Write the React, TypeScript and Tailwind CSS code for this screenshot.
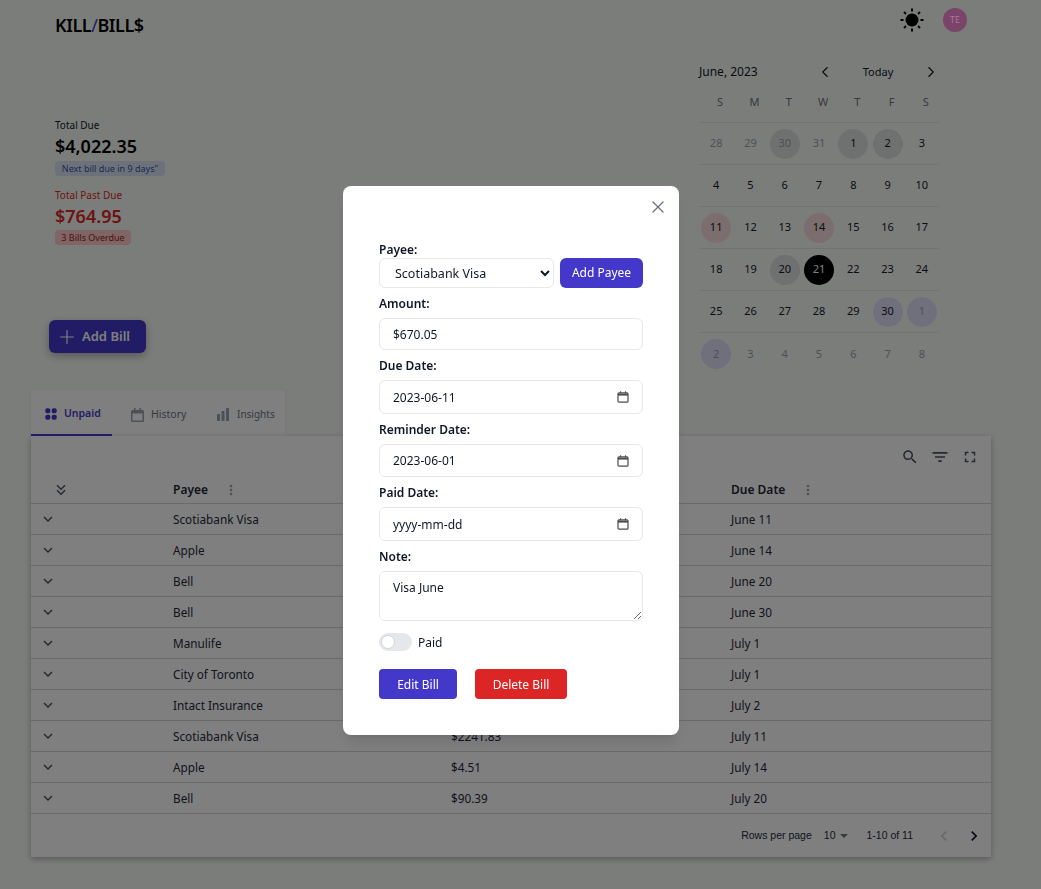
import { ChevronLeft, ChevronRight, Plus, X } from "lucide-react";

const FONT = "font-['Noto_Sans',sans-serif]";

const weeks = [
  [["28", "m", ""], ["29", "m", ""], ["30", "m", "gray"], ["31", "m", ""], ["1", "", "gray"], ["2", "", "gray"], ["3", "", ""]],
  [["4", "", ""], ["5", "", ""], ["6", "", ""], ["7", "", ""], ["8", "", ""], ["9", "", ""], ["10", "", ""]],
  [["11", "", "red"], ["12", "", ""], ["13", "", ""], ["14", "", "red"], ["15", "", ""], ["16", "", ""], ["17", "", ""]],
  [["18", "", ""], ["19", "", ""], ["20", "", "gray"], ["21", "", "today"], ["22", "", ""], ["23", "", ""], ["24", "", ""]],
  [["25", "", ""], ["26", "", ""], ["27", "", ""], ["28", "", ""], ["29", "", ""], ["30", "", "blue"], ["1", "m", "blue"]],
  [["2", "m", "blue"], ["3", "m", ""], ["4", "m", ""], ["5", "m", ""], ["6", "m", ""], ["7", "m", ""], ["8", "m", ""]],
];

const rows = [
  ["Scotiabank Visa", "$670.05", "June 11"],
  ["Apple", "$4.51", "June 14"],
  ["Bell", "$90.39", "June 20"],
  ["Bell", "$65.00", "June 30"],
  ["Manulife", "$312.40", "July 1"],
  ["City of Toronto", "$188.22", "July 1"],
  ["Intact Insurance", "$145.10", "July 2"],
  ["Scotiabank Visa", "$2241.83", "July 11"],
  ["Apple", "$4.51", "July 14"],
  ["Bell", "$90.39", "July 20"],
];

function MuiIcon({ d, size, className }: { d: string; size: number; className?: string }) {
  return (
    <svg width={size} height={size} viewBox="0 0 24 24" fill="currentColor" className={className}>
      <path d={d} />
    </svg>
  );
}

const icons = {
  search:
    "M15.5 14h-.79l-.28-.27C15.41 12.59 16 11.11 16 9.5 16 5.91 13.09 3 9.5 3S3 5.91 3 9.5 5.91 16 9.5 16c1.61 0 3.09-.59 4.23-1.57l.27.28v.79l5 4.99L20.49 19l-4.99-5zm-6 0C7.01 14 5 11.99 5 9.5S7.01 5 9.5 5 14 7.01 14 9.5 11.99 14 9.5 14z",
  filter: "M10 18h4v-2h-4v2zM3 6v2h18V6H3zm3 7h12v-2H6v2z",
  full: "M7 14H5v5h5v-2H7v-3zm-2-4h2V7h3V5H5v5zm12 7h-3v2h5v-5h-2v3zM14 5v2h3v3h2V5h-5z",
  expand: "M16.59 8.59 12 13.17 7.41 8.59 6 10l6 6 6-6z",
  expandAll: "M18 6.41 16.59 5 12 9.58 7.41 5 6 6.41l6 6zM18 13l-1.41-1.41L12 16.17l-4.59-4.58L6 13l6 6z",
  more: "M12 8c1.1 0 2-.9 2-2s-.9-2-2-2-2 .9-2 2 .9 2 2 2zm0 2c-1.1 0-2 .9-2 2s.9 2 2 2 2-.9 2-2-.9-2-2-2zm0 6c-1.1 0-2 .9-2 2s.9 2 2 2 2-.9 2-2-.9-2-2-2z",
  prev: "M15.41 7.41 14 6l-6 6 6 6 1.41-1.41L10.83 12z",
  next: "M10 6 8.59 7.41 13.17 12l-4.58 4.59L10 18l6-6z",
};

function Sun() {
  return (
    <svg width="26" height="26" viewBox="0 0 26 26" fill="black" stroke="black" strokeWidth="2">
      <circle cx="13" cy="13" r="6.5" stroke="none" />
      <path d="M13 1.5v3M13 21.5v3M1.5 13h3M21.5 13h3M5 5l2 2M19 19l2 2M5 21l2-2M19 7l2-2" fill="none" />
    </svg>
  );
}

function Calendar() {
  const tone: Record<string, string> = {
    gray: "bg-[#dfe0e1]",
    red: "bg-[#f8dcdc]",
    blue: "bg-[#e0e0fb]",
    today: "bg-black text-white",
  };
  return (
    <div className="w-[240px] text-[11px] text-gray-900">
      <div className="flex h-[20px] items-center pt-[2px]">
        <span className="w-[117px] shrink-0 text-xs">June, 2023</span>
        <ChevronLeft className="h-[18px] w-[18px] shrink-0" strokeWidth={1.5} />
        <span className="w-[88px] shrink-0 text-center">Today</span>
        <ChevronRight className="h-[18px] w-[18px] shrink-0" strokeWidth={1.5} />
      </div>
      <div className="mt-[1px] grid h-[41px] grid-cols-7 items-center border-b border-gray-200 text-center text-gray-500">
        {["S", "M", "T", "W", "T", "F", "S"].map((d, i) => (
          <span key={i} className="pl-[8px]">
            {d}
          </span>
        ))}
      </div>
      {weeks.map((week, w) => (
        <div key={w} className="grid h-[42px] grid-cols-7 items-center border-b border-gray-200 last:border-b-0">
          {week.map(([label, muted, mark], i) => (
            <div key={i} className="flex justify-center">
              <span
                className={`flex h-[30px] w-[30px] items-center justify-center rounded-full ${tone[mark] ?? ""} ${
                  muted ? "text-gray-400" : ""
                }`}
              >
                {label}
              </span>
            </div>
          ))}
        </div>
      ))}
    </div>
  );
}

function BillTable() {
  return (
    <div className="w-[960px] bg-white shadow-[0_2px_6px_rgba(0,0,0,0.3)]">
      <div className="flex h-[40px] items-center justify-end pr-[12px] pt-[1px] text-gray-600">
        <MuiIcon d={icons.search} size={18} className="mr-[11px]" />
        <MuiIcon d={icons.filter} size={20} className="mr-[11px]" />
        <MuiIcon d={icons.full} size={18} />
      </div>
      <div className="grid h-[28px] grid-cols-[142px_278px_280px_1fr] items-center border-b border-gray-300 text-xs font-semibold text-gray-800">
        <MuiIcon d={icons.expandAll} size={18} className="ml-[21px] text-gray-600" />
        <div className="flex items-center">
          <span className="w-[50px]">Payee</span>
          <MuiIcon d={icons.more} size={16} className="text-gray-400" />
        </div>
        <div className="flex items-center">
          <span className="w-[50px]">Amount</span>
          <MuiIcon d={icons.more} size={16} className="text-gray-400" />
        </div>
        <div className="flex items-center">
          <span className="w-[69px]">Due Date</span>
          <MuiIcon d={icons.more} size={16} className="text-gray-400" />
        </div>
      </div>
      {rows.map(([payee, amount, due], i) => (
        <div
          key={i}
          className="grid h-[31px] grid-cols-[142px_278px_280px_1fr] items-center border-b border-gray-300 text-[11.75px] text-gray-800"
        >
          <MuiIcon d={icons.expand} size={18} className="ml-[8px] text-gray-600" />
          <span className="pt-[1px]">{payee}</span>
          <span className="pt-[1px]">{amount}</span>
          <span className="pt-[1px]">{due}</span>
        </div>
      ))}
      <div className="flex h-[43px] items-center justify-end font-['Liberation_Sans',sans-serif] text-[10.5px] text-gray-800">
        <span>Rows per page</span>
        <span className="ml-[12px]">10</span>
        <span className="ml-[5px] mt-[1px] h-0 w-0 border-x-[4px] border-t-[4px] border-x-transparent border-t-gray-500" />
        <span className="ml-[18px]">1-10 of 11</span>
        <MuiIcon d={icons.prev} size={20} className="ml-[21px] text-gray-300" />
        <MuiIcon d={icons.next} size={20} className="ml-[10px] mr-[7px] text-gray-900" />
      </div>
    </div>
  );
}

function Tabs() {
  return (
    <div className="flex h-[46px] w-[254px] items-stretch rounded-t bg-white text-[10.5px] text-gray-500 shadow-[0_0_3px_rgba(0,0,0,0.08)]">
      <div className="flex w-[81px] items-center gap-[7px] border-b-2 border-[#4338ca] pl-[14px] pt-[3px] font-semibold text-[#4338ca]">
        <svg width="12" height="12" viewBox="0 0 12 12" fill="currentColor">
          <rect x="0.3" y="0.3" width="5" height="5" rx="1.8" />
          <rect x="6.7" y="0.3" width="5" height="5" rx="1.8" />
          <rect x="0.3" y="6.7" width="5" height="5" rx="1.8" />
          <rect x="6.7" y="6.7" width="5" height="5" rx="1.8" />
        </svg>
        Unpaid
      </div>
      <div className="flex w-[87px] items-center gap-[7px] pl-[19px] pt-[3px]">
        <svg width="13" height="14" viewBox="0 0 13 14" fill="currentColor" className="text-gray-400">
          <path d="M3 0h1.5v2h4V0H10v2h1.5A1.5 1.5 0 0 1 13 3.5v9a1.5 1.5 0 0 1-1.5 1.5h-10A1.5 1.5 0 0 1 0 12.5v-9A1.5 1.5 0 0 1 1.5 2H3zM1.5 5.5v7h10v-7z" />
        </svg>
        History
      </div>
      <div className="flex w-[86px] items-center gap-[8px] pl-[18px] pt-[3px] text-[10px]">
        <svg width="12" height="13" viewBox="0 0 12 13" fill="currentColor" className="text-gray-400">
          <rect x="0" y="6" width="3" height="7" rx="0.5" />
          <rect x="4.5" y="3" width="3" height="10" rx="0.5" />
          <rect x="9" y="0" width="3" height="13" rx="0.5" />
        </svg>
        Insights
      </div>
    </div>
  );
}

function Field({ label, className, children }: { label: string; className?: string; children: React.ReactNode }) {
  return (
    <div className={className ?? "mt-[6px]"}>
      <label className="block h-[20px] text-xs font-semibold leading-[20px] text-gray-900">{label}</label>
      {children}
    </div>
  );
}

const inputClass =
  "mt-1 block w-full rounded-md border border-gray-200 bg-white px-[13px] text-xs text-gray-900 outline-none placeholder:text-gray-900";

function DateInput({ value, height }: { value?: string; height: string }) {
  return (
    <div className="relative">
      <input type="text" defaultValue={value} placeholder="yyyy-mm-dd" className={`${inputClass} ${height}`} />
      <svg
        width="12"
        height="12"
        viewBox="0 0 12 12"
        fill="none"
        stroke="#4b4b4b"
        className="absolute right-[14px] top-[11px]"
      >
        <rect x="1" y="1.8" width="10" height="9.4" rx="1" strokeWidth="1.2" />
        <path d="M1 3.6h10" strokeWidth="2" />
        <path d="M3.5 0.3v2M8.5 0.3v2" strokeWidth="1.1" />
      </svg>
    </div>
  );
}

function BillModal() {
  return (
    <div className="fixed inset-0 z-40 bg-black/50 pl-[343px] pt-[186px]">
      <div className={`relative h-[549px] w-[336px] rounded-lg bg-white px-[36px] pt-[54px] shadow-lg ${FONT}`}>
        <button type="button" className="absolute right-[11px] top-[11px] text-gray-500" aria-label="Close">
          <X className="h-[20px] w-[20px]" strokeWidth={1.5} />
        </button>
        <Field label="Payee:" className="mt-0">
          <div className="-mt-[2px] flex gap-[6px]">
            <select
              defaultValue="Scotiabank Visa"
              className="h-[30px] w-[175px] rounded-md border border-gray-200 bg-white pl-[11px] text-[12.5px] text-gray-900 outline-none"
            >
              <option>Scotiabank Visa</option>
              <option>Apple</option>
              <option>Bell</option>
            </select>
            <button type="button" className="h-[30px] w-[83px] rounded-md bg-[#4338ca] text-xs text-white">
              Add Payee
            </button>
          </div>
        </Field>
        <Field label="Amount:">
          <input type="text" defaultValue="$670.05" className={`${inputClass} h-[32px]`} />
        </Field>
        <Field label="Due Date:">
          <DateInput value="2023-06-11" height="h-[34px]" />
        </Field>
        <Field label="Reminder Date:">
          <DateInput value="2023-06-01" height="h-[33px]" />
        </Field>
        <Field label="Paid Date:">
          <DateInput height="h-[34px]" />
        </Field>
        <Field label="Note:">
          <textarea defaultValue="Visa June" className={`${inputClass} h-[50px] pt-[8px]`} />
        </Field>
        <div className="mt-[12px] flex h-[18px] items-center gap-[6px] text-xs text-gray-900">
          <span className="relative h-[18px] w-[33px] rounded-full bg-gray-200">
            <span className="absolute left-[2px] top-[2px] h-[14px] w-[14px] rounded-full border border-gray-300 bg-white" />
          </span>
          <span className="pt-[2px]">Paid</span>
        </div>
        <div className="mt-[18px] flex gap-[18px]">
          <button type="button" className="h-[30px] w-[78px] rounded bg-[#4338ca] pt-[1px] text-xs text-white">
            Edit Bill
          </button>
          <button type="button" className="h-[30px] w-[92px] rounded bg-[#dc2626] pt-[1px] text-xs text-white">
            Delete Bill
          </button>
        </div>
      </div>
    </div>
  );
}

export default function App() {
  return (
    <div className={`min-h-screen bg-[#f7faf7] ${FONT}`}>
      <header className="flex h-[50px] items-center pl-[55px] pr-[74px]">
        <h1 className="text-lg font-semibold tracking-tight text-black">
          KILL<span className="font-normal text-[#4338ca]">/</span>BILL$
        </h1>
        <div className="ml-auto flex items-center gap-[18px] pb-[10px]">
          <Sun />
          <div className="relative z-50 flex h-[24px] w-[24px] items-center justify-center rounded-full bg-[#7a4468] text-[9px] text-[#a87a98]">
            TE
          </div>
        </div>
      </header>
      <div className="flex items-start justify-between pl-[49px] pr-[102px] pt-[11px]">
        <div>
          <div className="ml-[6px] mt-[56px]">
            <p className="text-[10px] leading-[16px] text-gray-900">Total Due</p>
            <p className="text-lg font-semibold leading-[26px] text-black">$4,022.35</p>
            <span className="mt-[2px] block w-[110px] rounded-sm bg-[#dbe5f5] text-center text-[9px] leading-[15px] text-[#3056a8]">
              Next bill due in 9 days"
            </span>
            <p className="mt-[11px] text-[10px] leading-[16px] text-[#dc2626]">Total Past Due</p>
            <p className="text-lg font-semibold leading-[26px] text-[#dc2626]">$764.95</p>
            <span className="mt-[1px] block w-[76px] rounded-sm bg-[#fecaca] text-center text-[9px] leading-[15px] text-[#991b1b]">
              3 Bills Overdue
            </span>
          </div>
          <button
            type="button"
            className="mt-[75px] flex h-[33px] w-[97px] items-center gap-[4px] rounded-md bg-[#4338ca] pl-[7px] text-[13px] font-semibold text-white shadow-[0_3px_8px_rgba(0,0,0,0.3)]"
          >
            <Plus className="h-[22px] w-[22px]" strokeWidth={1.25} />
            Add Bill
          </button>
        </div>
        <Calendar />
      </div>
      <div className="pl-[31px] pb-[33px] pt-[15px]">
        <Tabs />
        <BillTable />
      </div>
      <BillModal />
    </div>
  );
}
